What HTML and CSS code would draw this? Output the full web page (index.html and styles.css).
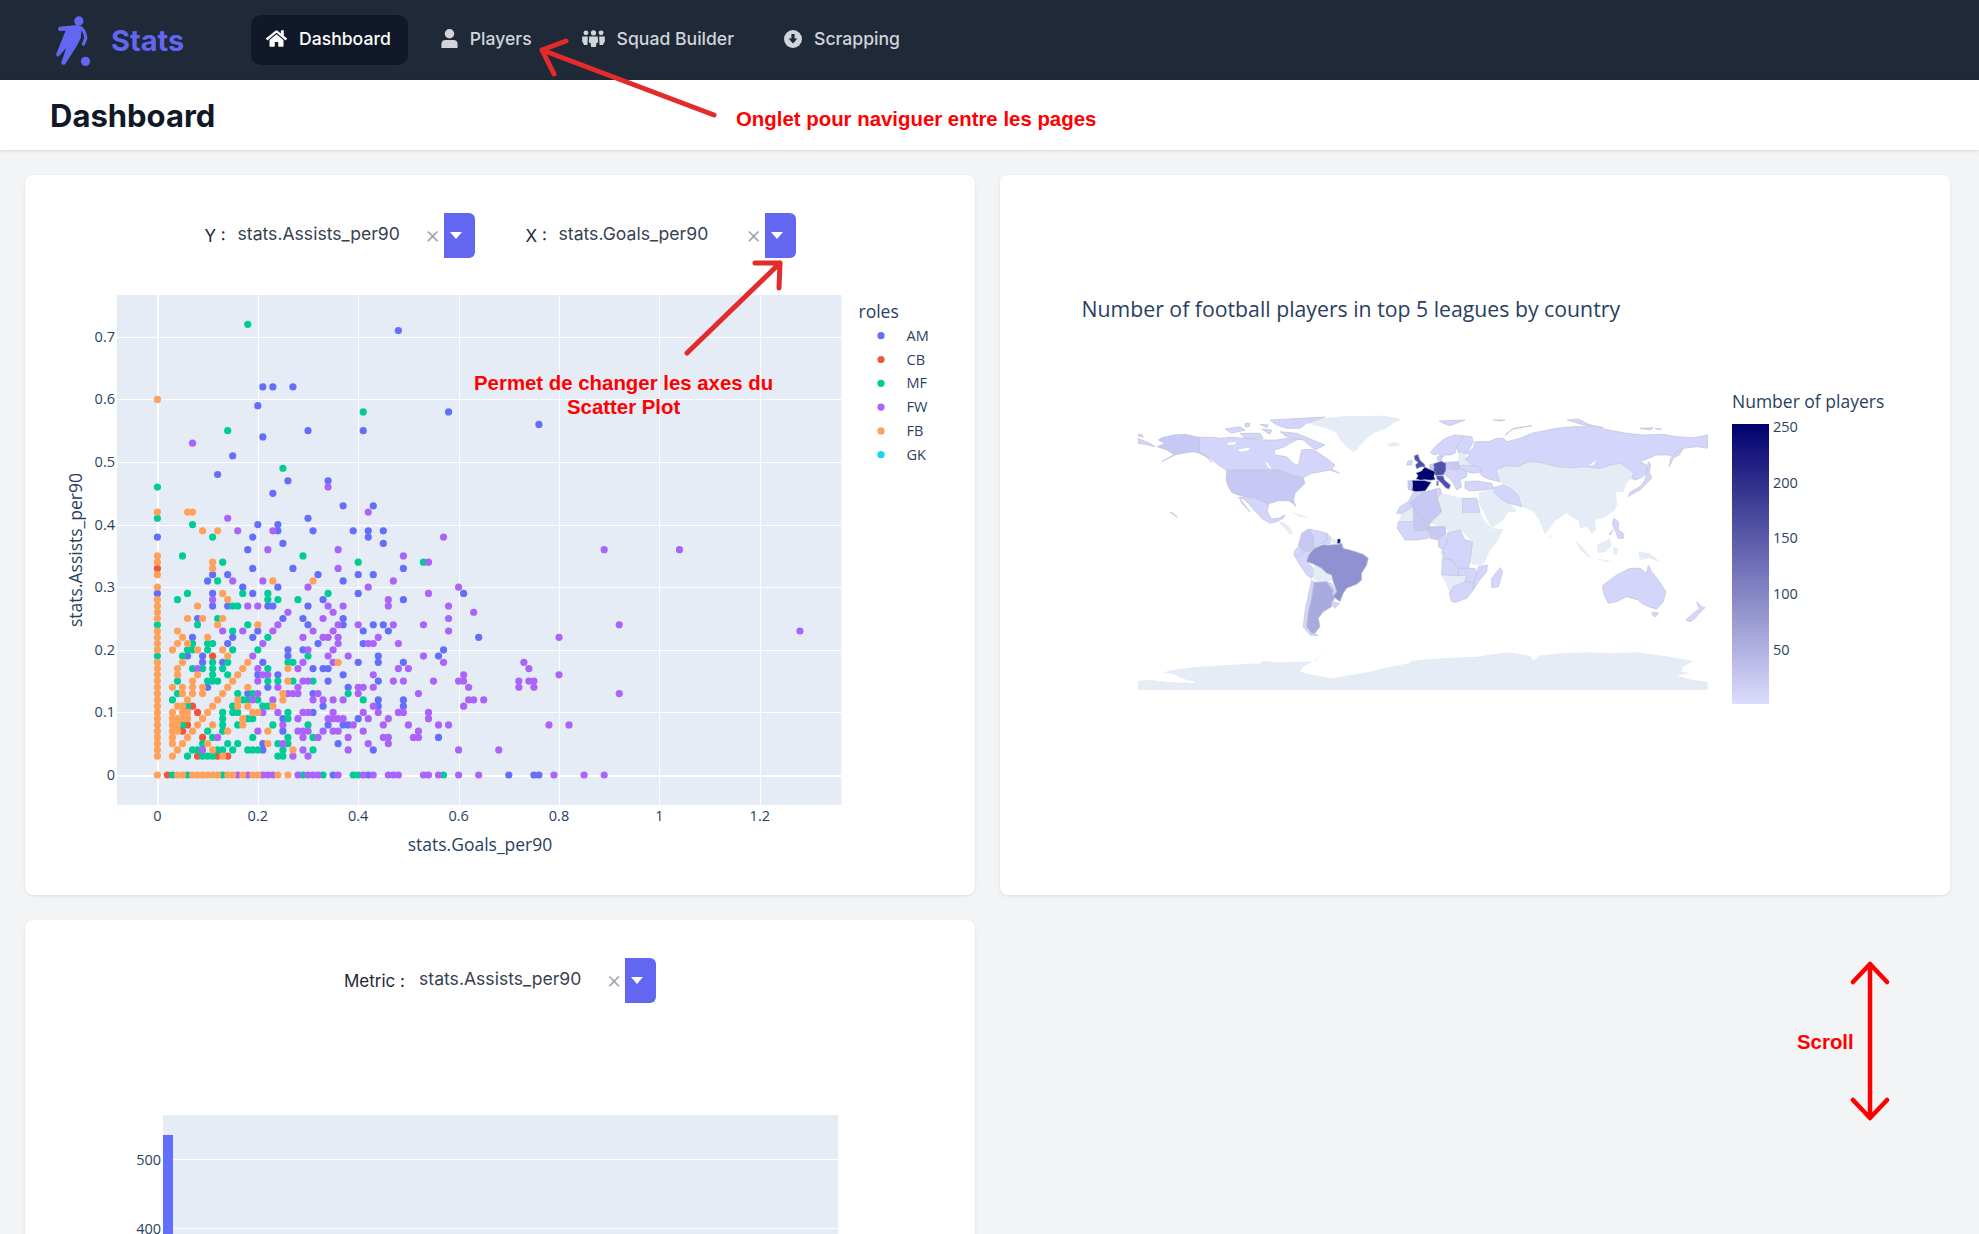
FILE: index.html
```html
<!DOCTYPE html>
<html>
<head>
<meta charset="UTF-8">
<title>Stats - Dashboard</title>
<link rel="stylesheet" href="styles.css">
</head>
<body>
<nav class="topbar">
  <svg class="logo" viewBox="45 20 110 165">
    <circle cx="116" cy="44" r="14"/>
    <circle cx="136" cy="165" r="14"/>
    <path d="M57 61 L110 56 Q120 56 124 62 L122 95 L112 115 L76 172 Q68 180 63 170 L78 125 L56 150 Q47 152 48 144 L76 73 L57 74 Q50 68 57 61 Z"/>
    <path class="logo-arm" d="M122 64 Q135 75 137 95 L130 113"/>
  </svg>
  <span class="brand">Stats</span>
  <div class="tabs">
    <a class="tab tab-active" href="#">
      <svg class="ico ico-home" viewBox="0 0 576 512"><path d="M280.37 148.26L96 300.11V464a16 16 0 0 0 16 16l112.06-.29a16 16 0 0 0 15.92-16V368a16 16 0 0 1 16-16h64a16 16 0 0 1 16 16v95.64a16 16 0 0 0 16 16.05L464 480a16 16 0 0 0 16-16V300L295.67 148.26a12.19 12.19 0 0 0-15.3 0zM571.6 251.47L488 182.56V44.05a12 12 0 0 0-12-12h-56a12 12 0 0 0-12 12v72.61L318.47 43a48 48 0 0 0-61 0L4.34 251.47a12 12 0 0 0-1.6 16.9l25.5 31A12 12 0 0 0 45.15 301l235.22-193.74a12.19 12.19 0 0 1 15.3 0L530.9 301a12 12 0 0 0 16.9-1.6l25.5-31a12 12 0 0 0-1.7-16.93z"/></svg>
      Dashboard
    </a>
    <a class="tab" href="#">
      <svg class="ico ico-user" viewBox="0 0 17 20"><circle cx="8.5" cy="5" r="5"/><path d="M0 20 V16 Q0 11.5 4.5 11.5 H12.5 Q17 11.5 17 16 V20 Z"/></svg>
      Players
    </a>
    <a class="tab" href="#">
      <svg class="ico ico-squad" viewBox="0 0 24 18"><circle cx="4" cy="3" r="2.6"/><circle cx="12" cy="3" r="2.8"/><circle cx="20" cy="3" r="2.6"/><path d="M0 7 H6 L5.6 16 H2 L0 12 Z"/><path d="M24 7 H18 L18.4 16 H22 L24 12 Z"/><path d="M7.5 7 H16.5 L17 13 L15 14 L14.6 18 H9.4 L9 14 L7 13 Z"/></svg>
      Squad Builder
    </a>
    <a class="tab" href="#">
      <svg class="ico ico-down" viewBox="0 0 18 18"><circle cx="9" cy="9" r="9"/><path class="ico-cut" d="M7.4 4 H10.6 V8.6 H13.4 L9 13.6 L4.6 8.6 H7.4 Z"/></svg>
      Scrapping
    </a>
  </div>
</nav>

<header class="page-head">
  <h1>Dashboard</h1>
</header>

<main class="board">
  <section class="card">
    <div class="filters">
      <div class="filter">
        <span class="filter-label">Y :</span>
        <div class="select"><span class="select-value">stats.Assists_per90</span><span class="select-clear">×</span><span class="select-btn"></span></div>
      </div>
      <div class="filter">
        <span class="filter-label">X :</span>
        <div class="select"><span class="select-value">stats.Goals_per90</span><span class="select-clear">×</span><span class="select-btn"></span></div>
      </div>
    </div>
    <svg id="scatter" class="chart chart-scatter" viewBox="25 265 950 630">
      <rect class="plot-bg" x="117" y="295" width="724.5" height="510"/>
      <g id="scatter-grid"></g>
      <g id="scatter-dots"></g>
      <text class="axis-title" x="480" y="851" text-anchor="middle">stats.Goals_per90</text>
      <text class="axis-title" transform="rotate(-90 82 550)" x="82" y="550" text-anchor="middle">stats.Assists_per90</text>
      <text class="legend-title" x="858.5" y="318">roles</text>
      <g id="scatter-legend"></g>
    </svg>
  </section>

  <section class="card">
    <svg class="chart chart-map" viewBox="1000 175 950 720">
      <defs>
        <linearGradient id="scale" x1="0" y1="0" x2="0" y2="1">
          <stop offset="0" stop-color="#01016f"/>
          <stop offset="1" stop-color="#dcdcfd"/>
        </linearGradient>
        <clipPath id="map-clip"><rect x="1138" y="410" width="570" height="280"/></clipPath>
      </defs>
      <text class="map-title" x="1081.5" y="317">Number of football players in top 5 leagues by country</text>

      <g clip-path="url(#map-clip)">
      <!-- americas, coords read off a 3x crop -->
      <g transform="translate(1130 405) scale(.3333)">
        <polygon class="c0" points="24,855 24,828 60,825 110,830 190,835 195,830 160,822 130,808 100,802 130,795 200,785 300,780 390,775 400,768 440,772 520,770 550,770 565,755 590,735 605,728 575,745 560,765 545,772 520,785 510,800 540,808 600,820 650,812 720,800 780,785 860,770 900,765 900,855"/>
        <polygon class="c0" points="530,52 580,40 650,33 760,32 815,42 790,55 770,70 730,85 700,110 680,135 672,142 650,125 630,105 620,85 590,70 550,60"/>
        <polygon class="c0" points="770,118 790,112 810,115 805,124 780,125"/>
        <polygon class="c1" points="208,97 208,140 240,160 265,180 290,196 445,195 470,205 500,215 520,218 545,205 575,200 600,195 628,205 605,192 615,180 590,160 560,140 540,133 515,135 510,160 505,182 490,175 470,155 435,150 432,135 465,125 480,115 510,100 530,105 470,100 440,105 400,105 350,100 300,97 270,100 250,97"/>
        <polygon class="c1" points="420,45 585,36 530,55 510,70 470,70 440,60"/>
        <polygon class="c1" points="450,80 500,85 560,110 585,120 555,135 520,105 470,95"/>
        <polygon class="c1" points="285,72 330,65 345,75 305,85"/>
        <polygon class="c1" points="330,85 390,85 400,100 345,100"/>
        <polygon class="c1" points="345,55 360,55 358,65 345,65"/>
        <polygon class="c1" points="390,58 415,60 410,68"/>
        <polygon class="c1" points="395,72 425,75 420,88"/>
        <polygon class="lake" points="290,115 318,110 316,118 296,120"/>
        <polygon class="lake" points="325,133 360,128 355,136 330,140"/>
        <polygon class="lake" points="405,170 412,172 424,192 416,190"/>
        <polygon class="lake" points="450,200 490,210 470,230 462,210"/>
        <polygon class="c2" points="208,97 208,140 225,150 245,172 235,160 210,145 190,140 160,145 130,150 95,170 135,150 110,135 82,125 105,115 85,105 95,98 130,90 165,88"/>
        <polygon class="c1" points="24,88 35,88 40,97 24,92"/>
        <polygon class="c1" points="24,100 60,115 75,125 45,118 24,115"/>
        <polygon class="c2" points="290,196 445,195 470,205 500,215 520,218 525,235 510,250 495,265 490,285 498,305 488,295 475,287 445,287 420,295 415,300 402,290 375,280 345,275 325,270 305,262 295,245 288,225"/>
        <polygon class="c1" points="325,278 345,275 375,280 402,290 415,300 412,320 425,342 445,340 465,330 460,340 440,350 420,355 395,340 375,318 355,295 340,282"/>
        <polygon class="c1" points="330,282 345,300 360,320 345,305 335,295"/>
        <polygon class="c1" points="120,322 130,325 143,337 132,330"/>
        <polygon class="c0" points="460,352 475,362 490,385 480,390 465,370 445,352"/>
        <polygon class="c0" points="480,322 510,328 540,340 510,335"/>
        <polygon class="c2" points="515,385 535,372 545,385 550,395 552,430 530,440 510,432 505,420 510,405"/>
        <polygon class="c1" points="535,372 565,378 590,385 590,405 575,415 560,425 552,430 550,395 545,385"/>
        <polygon class="c1" points="590,385 605,400 600,415 580,420 575,415 590,405"/>
        <polygon class="c0" points="602,400 620,402 622,416 600,415"/>
        <polygon class="c6" points="622,402 632,402 630,416 622,416"/>
        <polygon class="c1" points="495,435 510,422 520,440 505,455 492,450"/>
        <polygon class="c1" points="492,450 505,455 520,440 530,440 550,435 530,460 535,475 550,490 552,510 545,520 530,510 510,480"/>
        <polygon class="c0" points="552,478 575,490 590,505 605,510 608,525 590,530 575,535 552,525 550,510"/>
        <polygon class="c1" points="545,525 552,532 545,580 535,620 530,660 550,685 565,692 540,690 520,665 525,620 535,570"/>
        <polygon class="c3" points="552,532 590,530 610,555 620,560 615,575 605,598 605,605 580,620 565,640 570,665 555,685 545,685 530,665 535,620 545,580"/>
        <polygon class="c1" points="590,530 605,535 615,555 622,560 608,570 610,555"/>
        <polygon class="c1" points="605,590 628,595 615,610 605,600"/>
        <polygon class="c4" points="550,432 575,420 600,420 625,418 635,415 640,430 670,438 700,448 715,460 710,480 695,505 695,525 680,538 650,550 640,565 630,590 610,575 620,560 608,525 605,510 590,505 575,490 552,478 530,470 535,452"/>
      </g>

      <!-- old world -->
      <g transform="translate(1410 405) scale(.3333)">
        <polygon class="c0" points="0,855 0,768 60,762 130,758 200,755 290,742 360,752 372,768 385,752 450,745 530,742 600,745 680,742 760,752 850,768 820,785 815,800 840,805 800,812 850,825 893,830 893,855"/>
        <polygon class="c0" points="265,195 290,182 325,185 355,170 390,172 440,185 490,188 520,185 570,190 600,180 630,175 655,190 672,205 665,220 650,235 640,262 618,260 622,300 610,320 580,340 555,345 558,375 545,385 530,365 510,370 505,345 490,340 470,325 435,348 420,370 405,388 385,340 370,320 335,305 330,290 325,270 300,250 280,240 270,230 265,215"/>
        <polygon class="c0" points="208,262 250,250 255,265 270,280 295,295 315,310 320,322 295,320 280,345 245,370 225,330 205,290"/>
        <polygon class="c0" points="495,405 520,430 545,460 535,455 510,435"/>
        <polygon class="c0" points="545,458 600,468 620,468 590,470"/>
        <polygon class="c0" points="560,420 600,400 605,420 590,440 565,445"/>
        <polygon class="c0" points="610,425 625,430 620,450 610,445"/>
        <polygon class="c0" points="685,440 720,445 755,475 720,460 690,465"/>
        <polygon class="c0" points="418,388 426,395 420,400"/>
        <polygon class="c0" points="95,265 157,280 158,322 210,322 225,350 245,370 280,372 265,405 240,435 225,470 218,480 190,480 180,470 188,410 150,375 120,385 105,370 60,355 95,320 80,280"/>
        <polygon class="c0" points="-25,325 10,305 10,350 -35,350"/>
        <polygon class="c0" points="145,145 170,145 165,162 185,180 155,180 145,170"/>
        <polygon class="c0" points="95,512 145,512 170,510 165,530 130,545 120,565 105,530"/>

        <polygon class="c1" points="170,145 190,130 195,110 235,110 260,100 280,100 290,110 330,100 365,85 390,80 440,70 490,65 540,65 580,72 650,85 700,90 760,88 800,95 850,98 893,90 893,130 860,125 820,130 790,155 775,150 740,150 690,170 710,180 710,205 690,220 675,225 665,220 672,205 655,190 630,175 600,180 570,190 520,185 490,188 440,185 390,172 355,170 325,185 290,182 260,195 265,215 270,230 235,222 215,212 205,195 205,185 185,180 165,162 180,150"/>
        <polygon class="c1" points="820,130 808,150 790,160 778,185 782,160 800,140"/>
        <polygon class="c1" points="285,92 310,70 365,62 310,72 290,85"/>
        <polygon class="c1" points="88,48 165,45 120,62 100,55"/>
        <polygon class="c1" points="250,45 285,45 270,48"/>
        <polygon class="c1" points="472,45 505,42 535,58 580,68 520,60"/>
        <polygon class="c1" points="690,70 730,68 720,75"/>
        <polygon class="c1" points="735,70 755,72 740,73"/>
        <polygon class="lake" points="535,182 560,165 550,180"/>
        <polygon class="c1" points="62,143 75,125 105,100 135,90 160,92 150,110 140,125 135,145 120,150 105,150 95,160 85,145 72,150"/>
        <polygon class="c1" points="160,92 185,95 190,110 180,130 170,145 145,142 140,125 150,110"/>
        <polygon class="c1" points="82,155 95,155 93,168 82,165"/>
        <polygon class="c2" points="105,172 145,170 152,185 140,195 110,190"/>
        <polygon class="c1" points="145,190 155,180 185,182 205,185 215,200 190,205 170,200"/>
        <polygon class="c1" points="112,190 140,195 145,190 170,200 170,215 150,225 155,245 140,255 130,235 120,222 105,210 100,195"/>
        <polygon class="c1" points="165,230 200,228 245,235 250,250 220,255 180,258 165,250"/>
        <polygon class="c1" points="250,248 280,240 300,250 325,270 330,290 335,305 318,300 295,295 270,280 255,265"/>
        <polygon class="c1" points="715,170 722,180 718,200 725,220 710,235 690,255 665,268 655,275 660,262 690,245 705,225 710,200"/>
        <polygon class="c1" points="612,340 625,350 625,375 640,385 640,400 625,400 615,375 607,355"/>
        <polygon class="c1" points="597,388 610,375 600,390"/>
        <polygon class="c1" points="580,540 620,510 640,500 660,490 690,490 710,505 715,480 725,500 745,525 768,560 760,590 740,612 715,605 695,595 685,585 650,575 620,590 595,595 585,575 577,550"/>
        <polygon class="c1" points="725,623 745,623 738,635 730,633"/>
        <polygon class="c1" points="860,590 875,605 885,608 868,625 855,640 840,650 828,645 850,625 868,612"/>

        <polygon class="c1" points="-41,325 -30,305 -5,290 10,262 30,258 40,262 0,295 10,305 -25,325"/>
        <polygon class="c2" points="0,295 40,262 78,252 82,280 95,320 60,355 30,340 10,305"/>
        <polygon class="c2" points="10,305 30,340 60,355 55,375 15,378 10,350"/>
        <polygon class="c1" points="-35,350 10,350 15,378 55,375 55,400 20,405 -15,405 -25,390 -38,370"/>
        <polygon class="c2" points="55,365 105,365 108,385 85,405 60,400"/>
        <polygon class="c1" points="157,280 200,280 210,322 158,322"/>
        <polygon class="c1" points="78,252 90,250 95,265 80,280"/>
        <polygon class="c1" points="85,405 105,385 112,410 100,435 85,425"/>
        <polygon class="c1" points="112,385 150,375 165,405 188,410 180,470 175,490 145,490 125,465 100,458 95,440 112,410"/>
        <polygon class="c1" points="97,460 125,465 145,490 145,512 95,510"/>
        <polygon class="c1" points="145,490 175,490 195,490 200,505 190,535 165,530 170,510 145,512"/>
        <polygon class="c1" points="205,485 232,480 230,500 205,530 190,555 190,535 200,505"/>
        <polygon class="c1" points="118,565 130,545 165,530 190,535 190,555 170,580 135,592 125,590"/>
        <polygon class="c1" points="270,488 278,500 265,545 245,548 245,520"/>

        <polygon class="c2" points="60,178 74,178 70,198 60,192"/>
        <polygon class="c1" points="-6,168 7,167 5,180 -10,180"/>
        <polygon class="c5" points="12,152 24,148 30,165 44,178 46,186 32,186 20,192 16,180 24,172 14,165"/>
        <polygon class="c5" points="70,176 94,168 108,175 108,196 100,210 78,212 68,200 72,190"/>
        <polygon class="c5" points="78,212 100,212 104,225 122,240 118,252 108,250 92,232 80,222"/>
        <polygon class="c5" points="80,228 85,228 85,242 80,242"/>
        <polygon class="c2" points="-6,228 6,226 8,240 6,257 -6,252"/>
        <polygon class="c6" points="6,226 42,226 64,232 54,246 46,258 18,260 6,257 8,240"/>
        <polygon class="c6" points="18,204 34,198 44,186 66,196 76,200 72,214 76,224 60,226 44,224 32,226 18,222 24,212"/>
      </g>
      </g>

      <text class="legend-big" x="1732" y="408">Number of players</text>
      <rect x="1732" y="424" width="37" height="280" fill="url(#scale)"/>
      <text class="tick" x="1773" y="432">250</text>
      <text class="tick" x="1773" y="488">200</text>
      <text class="tick" x="1773" y="543">150</text>
      <text class="tick" x="1773" y="599">100</text>
      <text class="tick" x="1773" y="655">50</text>
    </svg>
  </section>

  <section class="card">
    <div class="filters">
      <div class="filter">
        <span class="filter-label filter-label-wide">Metric :</span>
        <div class="select"><span class="select-value">stats.Assists_per90</span><span class="select-clear">×</span><span class="select-btn"></span></div>
      </div>
    </div>
    <svg class="chart chart-bars" viewBox="25 1003 950 637">
      <rect class="plot-bg" x="163" y="1115" width="675" height="525"/>
      <line class="grid" x1="163" x2="838" y1="1159.5" y2="1159.5"/>
      <line class="grid" x1="163" x2="838" y1="1228.5" y2="1228.5"/>
      <rect class="bar" x="163" y="1135" width="10" height="505"/>
      <text class="tick" x="161" y="1165" text-anchor="end">500</text>
      <text class="tick" x="161" y="1234" text-anchor="end">400</text>
    </svg>
  </section>
</main>

<!-- red notes painted on the screenshot -->
<svg class="notes" viewBox="0 0 1979 1234">
  <path class="note-hand" d="M714 115 L542 50 M566 41 L542 50 L554 74"/>
  <path class="note-hand" d="M687 353 L780 263 M755 263 L780 263 L779 288"/>
  <path class="note-pure" d="M1870 964 V1118 M1853 982 L1870 964 L1887 982 M1853 1100 L1870 1118 L1887 1100"/>
</svg>
<div class="note note-tabs">Onglet pour naviguer entre les pages</div>
<div class="note note-axes">Permet de changer les axes du<br>Scatter Plot</div>
<div class="note note-scroll">Scroll</div>

<script src="chart.js"></script>
</body>
</html>
```

FILE: styles.css
```css
html, body { margin: 0; height: 100%; overflow: hidden; }
body {
    background: #f3f4f6;
    color: #111827;
    font-family: Inter, "Noto Sans", sans-serif;
}

/* top bar */
.topbar {
    height: 80px;
    background: #1f2937;
    display: flex;
    align-items: center;
    padding-left: 55px;
}
.logo { width: 37px; height: 55px; fill: #6366f1; }
.logo-arm { fill: none; stroke: #6366f1; stroke-width: 10; stroke-linecap: round; stroke-linejoin: round; }
.brand {
    margin-left: 19px;
    width: 72px;
    color: #6366f1;
    font-size: 29px;
    font-weight: 700;
}
.tabs { display: flex; gap: 18px; margin-left: 68px; }
.tab {
    height: 50px;
    box-sizing: border-box;
    padding: 0 17px 3px 15px;
    display: flex;
    align-items: center;
    gap: 12px;
    border-radius: 10px;
    color: #d1d5db;
    font-size: 17.6px;
    font-weight: 500;
    text-decoration: none;
}
.tab-active { background: #111827; color: #fff; }
.ico { fill: currentColor; flex: none; }
.ico-home { width: 21px; height: 19px; }
.ico-user { width: 17px; height: 19px; }
.ico-squad { width: 23px; height: 17px; }
.ico-down { width: 18px; height: 18px; }
.ico-cut { fill: #1f2937; }

/* page title */
.page-head {
    height: 70px;
    background: #fff;
    box-shadow: 0 1px 3px rgba(0,0,0,.12);
    display: flex;
    align-items: center;
    padding-left: 50px;
}
.page-head h1 { margin: 0; font-size: 31px; font-weight: 700; }

/* cards */
.board {
    display: grid;
    grid-template-columns: 950px 950px;
    grid-auto-rows: 720px;
    gap: 25px;
    padding: 25px 0 0 25px;
}
.card {
    background: #fff;
    border-radius: 8px;
    box-shadow: 0 1px 3px rgba(0,0,0,.1);
    overflow: hidden;
}
.chart { display: block; width: 950px; }
.chart-scatter { height: 630px; margin-top: 7px; }
.chart-map { height: 720px; }
.chart-bars { height: 637px; }

/* dropdowns */
.filters {
    display: flex;
    justify-content: center;
    gap: 51px;
    padding-top: 38px;
}
.filter { display: flex; align-items: center; }
.filter-label { width: 33px; font-size: 17px; color: #1f2937; }
.filter-label-wide { width: 75px; }
.select { width: 237px; height: 45px; display: flex; align-items: center; }
.select-value {
    flex: 1;
    font-size: 17.6px;
    color: #374151;
    padding-bottom: 4px;
}
.select-clear { margin-right: 3px; padding-bottom: 2px; font-size: 24px; font-weight: 300; color: #9ca3af; }
.select-btn {
    width: 31px;
    height: 45px;
    box-sizing: border-box;
    padding-left: 6px;
    background: #6366f1;
    border-radius: 0 6px 6px 0;
    display: flex;
    align-items: center;
}
.select-btn::after {
    content: "";
    border-left: 6px solid transparent;
    border-right: 6px solid transparent;
    border-top: 7px solid #fff;
}

/* plotly look */
.plot-bg { fill: #e5ecf6; }
.grid { stroke: #fff; stroke-width: 1; shape-rendering: crispEdges; }
.grid-zero { stroke-width: 2; }
.bar { fill: #636efa; }
.chart text { font-family: "Open Sans", sans-serif; fill: #2a3f5f; }
.tick { font-size: 14.5px; }
.axis-title { font-size: 17.5px; }
.legend-title { font-size: 17.5px; }
.legend-text { font-size: 14.5px; }
.legend-big { font-size: 17.5px; }
.map-title { font-size: 21.25px; }

/* map fills */
.c0 { fill: #e5ecf6; }
.c1, .c2, .c3, .c4, .c5, .c6 { stroke: #c1c3d6; stroke-width: .7; vector-effect: non-scaling-stroke; }
.c1 { fill: #d4d5fb; }
.c2 { fill: #c7c8f3; }
.c3 { fill: #a9aae0; }
.c4 { fill: #9091d1; }
.c5 { fill: #4f51ab; }
.c6 { fill: #01016f; }
.lake { fill: #fff; }

/* annotations on top */
.notes { position: absolute; left: 0; top: 0; width: 1979px; height: 1234px; pointer-events: none; }
.note-hand { fill: none; stroke: #e32b2b; stroke-width: 5; stroke-linecap: round; stroke-linejoin: round; }
.note-pure { fill: none; stroke: #f00; stroke-width: 4.5; stroke-linecap: round; stroke-linejoin: round; }
.note {
    position: absolute;
    color: #f00;
    font-family: "Liberation Sans", Arial, sans-serif;
    font-weight: 700;
    font-size: 20.4px;
    line-height: 24px;
    white-space: nowrap;
}
.note-tabs { left: 736px; top: 107px; }
.note-axes { left: 474px; top: 371px; text-align: center; }
.note-scroll { left: 1797px; top: 1030px; }
```

FILE: chart.js
```js
// scatter data typed in by hand, hundredths: { y: [x, x, ...] }
var roles = [
  { name: "AM", color: "#636efa", rows: {
    71:[48],62:[21,23,27],59:[20],58:[58],56:[76],55:[30,41],54:[21],51:[15],48:[12],47:[26,34],45:[23],43:[37,43],41:[30],
    40:[20,24],39:[24,31,39,42,45],38:[0,19,42],37:[25,45],36:[18],33:[19,27,49],32:[11,14,32,40,43],31:[10,37],30:[17,24],
    29:[0,11,19,40,61],28:[33,49],27:[11,14,22,23,30],25:[8,25,29,37],24:[30,37,43,45],23:[20,41,46],22:[7,15,19,64],
    21:[14,32,41],20:[26,29,57],19:[6,9,26,44,56],18:[9,13,21,40,44,49],17:[31,33,34],16:[20,24,37],15:[34,44],14:[10,22,38],
    13:[18,31],12:[44,49],11:[33,44,49],10:[31],9:[25,40],8:[34,37,38],7:[25],6:[56],5:[21,36],4:[21,43],0:[35,42,70,75,76]
  }},
  { name: "CB", color: "#ef553b", rows: {
    33:[0],19:[11],11:[7],10:[8],8:[6],7:[5],6:[9],3:[8,12,14],0:[2]
  }},
  { name: "MF", color: "#00cc96", rows: {
    72:[18],58:[41],55:[14],49:[25],46:[0],41:[0],40:[7],38:[11],35:[5,29],34:[13,40,53],31:[12],29:[6,17,22,34],28:[4,22,24,28],
    27:[15,16],25:[12],24:[0,8,18],23:[15],22:[22],21:[7,10,11],20:[6,7,10,15,20],19:[0,5,30],18:[11,14,26,27],17:[7,9,11,13,22],
    16:[11,14],15:[4,10,11,12,22,24,27,31],13:[4,16,19,38],12:[3,17,18,20,41],11:[6,15,21,22],10:[13,15,16,26],9:[13,18,19,26],
    8:[5,13,16,23,30],7:[10,13],6:[11,19,26,31],5:[9,14,16,24,26],4:[7,8,12,13,15,18,19,20,25,31],3:[6,9,10,11,24,25],
    0:[3,6,13,29,33,39,40,57]
  }},
  { name: "FW", color: "#ab63fa", rows: {
    53:[7],46:[34],42:[42],41:[14],39:[16,23],38:[57],36:[22,36,89,104],35:[49],34:[54],33:[36],31:[15,21,47],30:[30,42,60],29:[54],
    28:[11,46],27:[18,20,34,37,46,58],26:[26,35,63],25:[33,58],24:[24,36,40,47,53,92],23:[13,17,23,31,35,58,128],22:[29,33,34,36,44,80],
    21:[21,36,42,43,48],20:[30,35],19:[19,34,38,53],18:[29,35,57,73],17:[8,20,28,48,50,74],16:[21,22,43,61,80],
    15:[20,29,30,47,49,55,60,61,72,74,75],14:[24,28,40,41,43,62,72,75],13:[20,26,27,28,32,40,52,92],12:[19,23,31,33,35,37,62,63,65],
    11:[43,61],10:[21,24,29,30,35,41,44,48,49,54],9:[28,34,35,36,37,42,46,54],8:[25,39,45,50,56,58,78,82],7:[20,28,29,30,33,35,36,41,52],
    6:[12,29,32,38,45,46,51,52],5:[25,42,46],4:[9,29,38,60,68],3:[27,30],
    0:[16,18,21,22,23,28,30,31,32,36,41,43,46,47,48,53,54,56,60,64,79,85,89]
  }},
  { name: "FB", color: "#ffa15a", rows: {
    60:[0],42:[0,6,7],39:[9,12],35:[0],34:[0,11],33:[11],32:[0],31:[23,31],30:[0],29:[13],28:[0,14],27:[0,8],26:[0],25:[0,6,9,13],24:[12,20],
    23:[0,4],22:[0,5,10],21:[0,4,6],20:[0,3,8,13],19:[14],18:[0,5,18,36],17:[0,4,17,26],16:[0,4,8,16],15:[0,7,15,26],14:[0,3,5,7,9,14,18],
    13:[0,5,7,9,13,25],12:[0,6,12,16,25],11:[0,4,5,11,16,18,23],10:[0,3,5,6,10,19,20],9:[0,3,4,5,6,9,17],8:[0,3,4,8,11,17],7:[0,3,4,7,14,22],
    6:[0,3,6],5:[0,3,5,10,22],4:[0,4,11,27],3:[0,3,13],0:[0,4,5,7,8,9,10,11,12,14,15,17,19,20,24,26]
  }},
  { name: "GK", color: "#19d3f3", rows: {} }
];

var NS = "http://www.w3.org/2000/svg";
function el(parent, tag, attrs, text) {
  var node = document.createElementNS(NS, tag);
  for (var k in attrs) node.setAttribute(k, attrs[k]);
  if (text !== undefined) node.textContent = text;
  parent.appendChild(node);
  return node;
}

function px(x) { return 157.4 + x * 502; }
function py(y) { return 775 - y * 626; }

var grid = document.getElementById("scatter-grid");
[0, 0.2, 0.4, 0.6, 0.8, 1, 1.2].forEach(function (v) {
  var x = Math.round(px(v)) + 0.5;
  el(grid, "line", { "class": v === 0 ? "grid grid-zero" : "grid", x1: x, x2: x, y1: 295, y2: 805 });
  el(grid, "text", { "class": "tick", x: px(v), y: 821, "text-anchor": "middle" }, String(v));
});
[0, 0.1, 0.2, 0.3, 0.4, 0.5, 0.6, 0.7].forEach(function (v) {
  var y = Math.round(py(v)) + 0.5;
  el(grid, "line", { "class": v === 0 ? "grid grid-zero" : "grid", x1: 117, x2: 841.5, y1: y, y2: y });
  el(grid, "text", { "class": "tick", x: 115, y: py(v) + 5, "text-anchor": "end" }, String(v));
});

var dots = document.getElementById("scatter-dots");
var legend = document.getElementById("scatter-legend");
roles.forEach(function (role, i) {
  for (var y in role.rows) {
    role.rows[y].forEach(function (x) {
      el(dots, "circle", { cx: px(x / 100), cy: py(y / 100), r: 3.6, fill: role.color });
    });
  }
  var ly = 335.7 + i * 23.8;
  el(legend, "circle", { cx: 881, cy: ly, r: 3.6, fill: role.color });
  el(legend, "text", { "class": "legend-text", x: 906.5, y: ly + 5 }, role.name);
});
```
